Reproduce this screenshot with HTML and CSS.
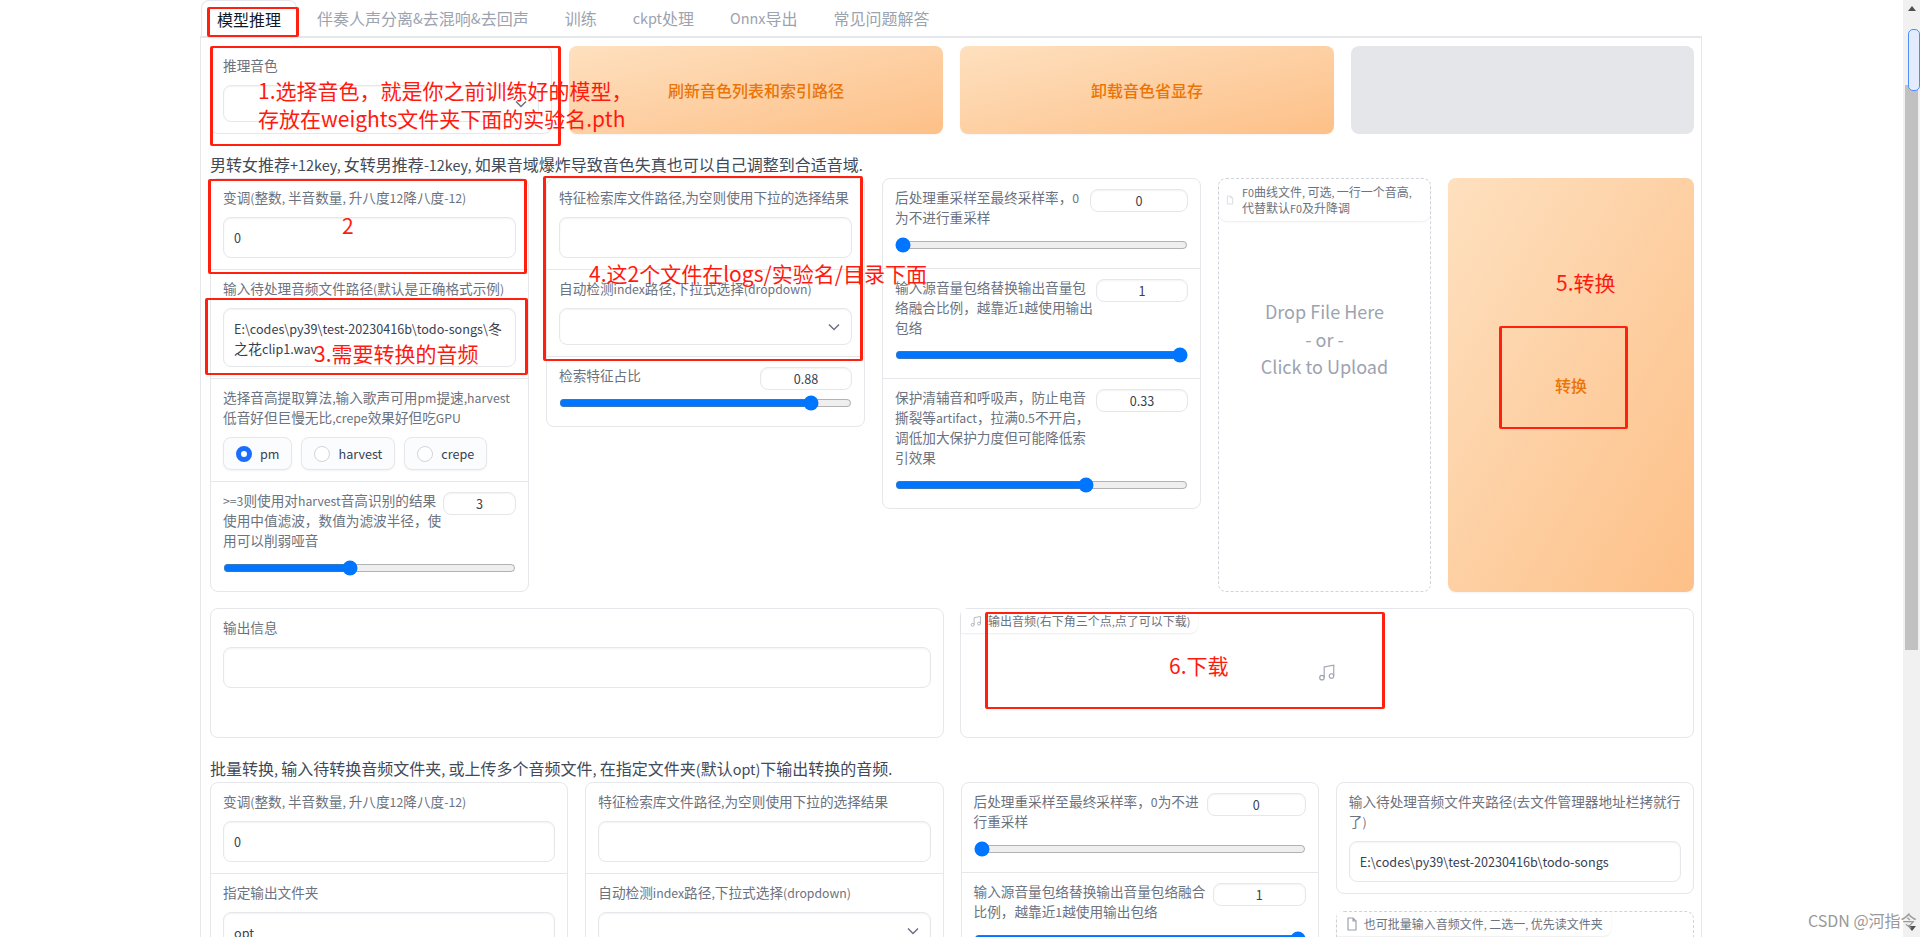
FILE: index.html
```html
<!DOCTYPE html>
<html lang="zh-CN">
<head>
    <meta charset="UTF-8">
    <meta name="viewport" content="width=device-width, initial-scale=1.0">
    <title>模型推理</title>
    <link rel="stylesheet" href="styles.css">
</head>
<body>
    <div class="page">
        <nav class="tabs">
            <div class="tab active">模型推理</div>
            <div class="tab">伴奏人声分离<span class="en">&amp;</span>去混响<span class="en">&amp;</span>去回声</div>
            <div class="tab">训练</div>
            <div class="tab"><span class="en">ckpt</span>处理</div>
            <div class="tab"><span class="en">Onnx</span>导出</div>
            <div class="tab">常见问题解答</div>
        </nav>

        <main class="frame">
            <section class="row-top">
                <div class="panel">
                    <div class="block">
                        <div class="label">推理音色</div>
                        <div class="input select">
                            <svg class="chevron" viewBox="0 0 12 8"><path d="M1 1.5l5 5 5-5"/></svg>
                        </div>
                    </div>
                </div>
                <button class="btn" type="button">刷新音色列表和索引路径</button>
                <button class="btn" type="button">卸载音色省显存</button>
                <div class="btn-empty"></div>
            </section>

            <p class="note">男转女推荐<span class="en">+12key, </span>女转男推荐<span class="en">-12key, </span>如果音域爆炸导致音色失真也可以自己调整到合适音域<span class="en">.</span></p>

            <section class="row-single">
                <div class="panel">
                    <div class="block">
                        <div class="label">变调<span class="en">(</span>整数<span class="en">, </span>半音数量<span class="en">, </span>升八度<span class="en">12</span>降八度<span class="en">-12)</span></div>
                        <div class="input">0</div>
                    </div>
                    <div class="block">
                        <div class="label">输入待处理音频文件路径<span class="en">(</span>默认是正确格式示例<span class="en">)</span></div>
                        <div class="input multi">E:\codes\py39\test-20230416b\todo-songs\<span class="zh">冬之花</span>clip1.wav</div>
                    </div>
                    <div class="block">
                        <div class="label">选择音高提取算法<span class="en">,</span>输入歌声可用<span class="en">pm</span>提速<span class="en">,harvest</span>低音好但巨慢无比<span class="en">,crepe</span>效果好但吃<span class="en">GPU</span></div>
                        <div class="radios">
                            <div class="radio"><span class="dot checked"></span>pm</div>
                            <div class="radio"><span class="dot"></span>harvest</div>
                            <div class="radio"><span class="dot"></span>crepe</div>
                        </div>
                    </div>
                    <div class="block">
                        <div class="num-row">
                            <div class="label"><span class="en">&gt;=3</span>则使用对<span class="en">harvest</span>音高识别的结果使用中值滤波，数值为滤波半径，使用可以削弱哑音</div>
                            <div class="num w73">3</div>
                        </div>
                        <input class="slider" type="range" min="0" max="7" value="3">
                    </div>
                </div>

                <div class="panel panel-short">
                    <div class="block">
                        <div class="label">特征检索库文件路径<span class="en">,</span>为空则使用下拉的选择结果</div>
                        <div class="input"></div>
                    </div>
                    <div class="block">
                        <div class="label">自动检测<span class="en">index</span>路径<span class="en">,</span>下拉式选择<span class="en">(dropdown)</span></div>
                        <div class="input select">
                            <svg class="chevron" viewBox="0 0 12 8"><path d="M1 1.5l5 5 5-5"/></svg>
                        </div>
                    </div>
                    <div class="block">
                        <div class="num-row">
                            <div class="label">检索特征占比</div>
                            <div class="num w92">0.88</div>
                        </div>
                        <input class="slider" type="range" min="0" max="1" step="0.01" value="0.88">
                    </div>
                </div>

                <div class="panel panel-short">
                    <div class="block">
                        <div class="num-row">
                            <div class="label">后处理重采样至最终采样率，<span class="en">0</span>为不进行重采样</div>
                            <div class="num w98">0</div>
                        </div>
                        <input class="slider" type="range" min="0" max="48000" value="0">
                    </div>
                    <div class="block">
                        <div class="num-row">
                            <div class="label">输入源音量包络替换输出音量包络融合比例，越靠近<span class="en">1</span>越使用输出包络</div>
                            <div class="num w92">1</div>
                        </div>
                        <input class="slider" type="range" min="0" max="1" step="0.01" value="1">
                    </div>
                    <div class="block">
                        <div class="num-row">
                            <div class="label">保护清辅音和呼吸声，防止电音撕裂等<span class="en">artifact</span>，拉满<span class="en">0.5</span>不开启，调低加大保护力度但可能降低索引效果</div>
                            <div class="num w92">0.33</div>
                        </div>
                        <input class="slider" type="range" min="0" max="0.5" step="0.01" value="0.33">
                    </div>
                </div>

                <div class="dropzone">
                    <div class="badge badge-full">
                        <svg class="file-icon faint" viewBox="0 0 12 14"><path d="M2 1h5l3 3v9H2zM7 1v3h3"/></svg>
                        <span><span class="en">F0</span>曲线文件<span class="en">, </span>可选<span class="en">, </span>一行一个音高<span class="en">, </span>代替默认<span class="en">F0</span>及升降调</span>
                    </div>
                    <div class="drop-text">
                        <div>Drop File Here</div>
                        <div>- or -</div>
                        <div>Click to Upload</div>
                    </div>
                </div>

                <button class="btn" type="button">转换</button>
            </section>

            <section class="row-output">
                <div class="panel">
                    <div class="block">
                        <div class="label">输出信息</div>
                        <div class="input"></div>
                    </div>
                </div>
                <div class="panel audio">
                    <div class="badge">
                        <svg class="music-icon small" viewBox="0 0 16 16"><circle cx="3.5" cy="13" r="2"/><circle cx="12" cy="11.5" r="2"/><path d="M5.5 13V3.5L14 2v9.5"/></svg>
                        <span>输出音频<span class="en">(</span>右下角三个点<span class="en">,</span>点了可以下载<span class="en">)</span></span>
                    </div>
                    <svg class="music-icon big" viewBox="0 0 16 16"><circle cx="3.5" cy="13" r="2"/><circle cx="12" cy="11.5" r="2"/><path d="M5.5 13V3.5L14 2v9.5"/></svg>
                </div>
            </section>

            <p class="note">批量转换<span class="en">, </span>输入待转换音频文件夹<span class="en">, </span>或上传多个音频文件<span class="en">, </span>在指定文件夹<span class="en">(</span>默认<span class="en">opt)</span>下输出转换的音频<span class="en">.</span></p>

            <section class="row-batch">
                <div class="panel">
                    <div class="block">
                        <div class="label">变调<span class="en">(</span>整数<span class="en">, </span>半音数量<span class="en">, </span>升八度<span class="en">12</span>降八度<span class="en">-12)</span></div>
                        <div class="input">0</div>
                    </div>
                    <div class="block">
                        <div class="label">指定输出文件夹</div>
                        <div class="input">opt</div>
                    </div>
                </div>
                <div class="panel">
                    <div class="block">
                        <div class="label">特征检索库文件路径<span class="en">,</span>为空则使用下拉的选择结果</div>
                        <div class="input"></div>
                    </div>
                    <div class="block">
                        <div class="label">自动检测<span class="en">index</span>路径<span class="en">,</span>下拉式选择<span class="en">(dropdown)</span></div>
                        <div class="input select">
                            <svg class="chevron" viewBox="0 0 12 8"><path d="M1 1.5l5 5 5-5"/></svg>
                        </div>
                    </div>
                </div>
                <div class="panel">
                    <div class="block">
                        <div class="num-row">
                            <div class="label">后处理重采样至最终采样率，<span class="en">0</span>为不进行重采样</div>
                            <div class="num w99">0</div>
                        </div>
                        <input class="slider" type="range" min="0" max="48000" value="0">
                    </div>
                    <div class="block">
                        <div class="num-row">
                            <div class="label">输入源音量包络替换输出音量包络融合比例，越靠近<span class="en">1</span>越使用输出包络</div>
                            <div class="num w93">1</div>
                        </div>
                        <input class="slider" type="range" min="0" max="1" step="0.01" value="1">
                    </div>
                </div>
                <div class="batch-side">
                    <div class="panel">
                        <div class="block">
                            <div class="label">输入待处理音频文件夹路径<span class="en">(</span>去文件管理器地址栏拷就行了<span class="en">)</span></div>
                            <div class="input">E:\codes\py39\test-20230416b\todo-songs</div>
                        </div>
                    </div>
                    <div class="dropzone">
                        <div class="badge">
                            <svg class="file-icon" viewBox="0 0 12 14"><path d="M2 1h5l3 3v9H2zM7 1v3h3"/></svg>
                            <span>也可批量输入音频文件<span class="en">, </span>二选一<span class="en">, </span>优先读文件夹</span>
                        </div>
                    </div>
                </div>
            </section>
        </main>
    </div>

    <div class="scrollbar">
        <span class="arrow up"></span>
        <span class="thumb"></span>
        <span class="thumb-focus"></span>
        <span class="arrow down"></span>
    </div>

    <!-- red notes drawn over the screenshot -->
    <div class="mark mark-tab"></div>
    <div class="mark mark-voice"></div>
    <div class="mark mark-pitch"></div>
    <div class="mark mark-path"></div>
    <div class="mark mark-index"></div>
    <div class="mark mark-run"></div>
    <div class="mark mark-audio"></div>
    <div class="mark-text text-voice">1.选择音色，就是你之前训练好的模型，<br>存放在weights文件夹下面的实验名.pth</div>
    <div class="mark-text text-pitch">2</div>
    <div class="mark-text text-path">3.需要转换的音频</div>
    <div class="mark-text text-index">4.这2个文件在logs/实验名/目录下面</div>
    <div class="mark-text text-run">5.转换</div>
    <div class="mark-text text-audio">6.下载</div>
    <div class="watermark">CSDN @河指令</div>
</body>
</html>
```

FILE: styles.css
```css
* {
    box-sizing: border-box;
}
html, body {
    height: 937px;
    overflow: hidden;
}
body {
    margin: 0;
    display: flex;
    background-color: white;
    color: #374151;
    font-family: "Noto Sans CJK SC", "Noto Sans", sans-serif;
    font-size: 13.65px;
    line-height: 20px;
}
.page {
    flex: 1;
    min-width: 0;
    padding: 0 201px 0 200px;
}
/* latin glyphs of the CJK font run large, the original page has them smaller */
.en {
    font-size: 0.9em;
    line-height: 1;
}
.zh {
    font-size: 14px;
    line-height: 1;
}

/* tabs */
.tabs {
    display: flex;
    height: 36px;
    padding-left: 1px;
}
.tab {
    display: flex;
    align-items: center;
    padding: 0 16px;
    margin-right: 4px;
    color: #9ca3af;
    font-size: 16px;
    white-space: pre;
}
.tab.active {
    padding: 0 15px;
    border: 1px solid #e5e7eb;
    border-bottom: none;
    border-radius: 8px 8px 0 0;
    color: #111827;
}

/* main frame */
.frame {
    height: 901px;
    padding: 8px 7px 0 9px;
    border: 1px solid #e5e7eb;
    border-top-width: 2px;
    border-bottom: none;
    overflow: hidden;
}
.row-top {
    display: grid;
    grid-template-columns: 342px 374px 374px 343px;
    gap: 17px;
}
.row-single {
    display: grid;
    grid-template-columns: 319px 319px 319px 213px 246px;
    gap: 17px;
    height: 414px;
    align-items: stretch;
}
.row-output {
    display: grid;
    grid-template-columns: repeat(2, 1fr);
    gap: 16px;
    height: 130px;
    margin-top: 16px;
}
.row-batch {
    display: grid;
    grid-template-columns: repeat(4, 1fr);
    gap: 17px;
}
.note {
    margin: 18px 0 2px;
    font-size: 16px;
    line-height: 24px;
    color: #414a59;
}

/* panels */
.panel {
    border: 1px solid #e5e7eb;
    border-radius: 8px;
    background-color: white;
}
.panel-short {
    align-self: start;
}
.block {
    padding: 8px 12px 11px;
    border-top: 1px solid #e5e7eb;
}
.block:first-child {
    border-top: none;
}
.label {
    margin-bottom: 10px;
    color: #6b7280;
}
.input {
    display: flex;
    align-items: center;
    height: 41px;
    padding: 0 10px;
    border: 1px solid #e5e7eb;
    border-radius: 8px;
    box-shadow: inset 0 1px 2px rgba(0,0,0,0.05);
    color: #374151;
    font-size: 12.6px;
}
.input.multi {
    display: block;
    height: 59px;
    padding: 10px 10px 0;
    word-break: break-all;
}
.input.select {
    height: 37px;
    justify-content: flex-end;
}
.chevron {
    width: 12px;
    height: 8px;
    margin-right: 1px;
    fill: none;
    stroke: #6b7280;
    stroke-width: 1.5;
}

/* radios */
.radios {
    display: flex;
    gap: 9px;
}
.radio {
    display: flex;
    align-items: center;
    gap: 8px;
    height: 33px;
    padding: 0 12px;
    border: 1px solid #e5e7eb;
    border-radius: 8px;
    box-shadow: 0 1px 2px rgba(0,0,0,0.05);
    background-color: #fbfcfd;
    font-size: 12.6px;
}
.dot {
    width: 16px;
    height: 16px;
    border: 1px solid #d1d5db;
    border-radius: 50%;
    background-color: white;
}
.dot.checked {
    border: 5px solid #1a6dff;
}

/* number + slider */
.num-row {
    display: flex;
    gap: 1px;
}
.num-row .label {
    flex: 1;
    margin-bottom: 0;
}
.num {
    flex: none;
    height: 23px;
    margin: 2px 0 -5px;
    border: 1px solid #e5e7eb;
    border-radius: 8px;
    box-shadow: inset 0 1px 2px rgba(0,0,0,0.05);
    text-align: center;
    line-height: 21px;
    color: #374151;
    font-size: 12.6px;
}
.w73 { width: 73px; }
.w92 { width: 92px; }
.w93 { width: 93px; }
.w98 { width: 98px; }
.w99 { width: 99px; }
.slider {
    display: block;
    width: 100%;
    margin: 10px 0 4px;
}

/* buttons */
.btn {
    border: none;
    border-radius: 8px;
    background: linear-gradient(to bottom right, #fee0bf, #fdc088);
    box-shadow: 0 1px 2px rgba(0,0,0,0.05);
    color: #ea7406;
    font-family: inherit;
    font-size: 16px;
    font-weight: 500;
}
.btn-empty {
    border-radius: 8px;
    background-color: #e5e6ea;
}

/* file drop */
.dropzone {
    position: relative;
    border: 1px dashed #d1d5db;
    border-radius: 8px;
}
.badge {
    display: inline-flex;
    align-items: center;
    gap: 6px;
    padding: 4px 8px 4px 9px;
    border-radius: 0 0 8px 0;
    background-color: white;
    box-shadow: 0 1px 2px rgba(0,0,0,0.08);
    color: #6b7280;
    font-size: 12px;
    line-height: 16px;
    vertical-align: top;
}
.badge-full {
    display: flex;
    gap: 8px;
    padding: 5px 12px 5px 7px;
    border-radius: 8px;
}
.drop-text {
    margin-top: 77px;
    text-align: center;
    color: #9ca3af;
    font-size: 18px;
    line-height: 27.5px;
}
.file-icon {
    flex: none;
    width: 12px;
    height: 14px;
    fill: none;
    stroke: #9ca3af;
    stroke-width: 1.2;
}
.file-icon.faint {
    width: 8px;
    height: 10px;
    stroke: #d1d5db;
}
.batch-side {
    display: flex;
    flex-direction: column;
    gap: 17px;
}
.batch-side .dropzone {
    height: 120px;
}

/* audio */
.audio {
    position: relative;
}
.music-icon {
    fill: none;
    stroke: #9ca3af;
    stroke-width: 1;
}
.music-icon.small {
    width: 12px;
    height: 12px;
}
.music-icon.big {
    position: absolute;
    left: 357px;
    top: 54px;
    width: 18px;
    height: 18px;
}

/* fake browser scrollbar */
.scrollbar {
    position: relative;
    flex: none;
    width: 17px;
    background-color: #f1f1f1;
}
.arrow {
    position: absolute;
    left: 5px;
    border-left: 4px solid transparent;
    border-right: 4px solid transparent;
}
.arrow.up {
    top: 6px;
    border-bottom: 5px solid #505050;
}
.arrow.down {
    top: 926px;
    border-top: 5px solid #505050;
}
.thumb {
    position: absolute;
    left: 2px;
    top: 85px;
    width: 13px;
    height: 565px;
    background-color: #c1c1c1;
}
.thumb-focus {
    position: absolute;
    left: 5px;
    top: 29px;
    width: 12px;
    height: 62px;
    border: 1px solid #4d8dff;
    border-radius: 5px;
    background-color: #e3ecff;
}

/* annotations */
.mark {
    position: absolute;
    border-style: solid;
    border-color: #ff2010;
    border-width: 2px 3px;
    border-radius: 2px;
}
.mark-tab { left: 207px; top: 7px; width: 92px; height: 30px; }
.mark-voice { left: 210px; top: 46px; width: 351px; height: 100px; }
.mark-pitch { left: 208px; top: 179px; width: 319px; height: 95px; }
.mark-path { left: 205px; top: 298px; width: 323px; height: 77px; }
.mark-index { left: 543px; top: 176px; width: 320px; height: 185px; }
.mark-run { left: 1499px; top: 326px; width: 129px; height: 103px; }
.mark-audio { left: 985px; top: 612px; width: 400px; height: 97px; }
.mark-text {
    position: absolute;
    color: #ff1a10;
    font-size: 21px;
    line-height: 28px;
    white-space: nowrap;
}
.text-voice { left: 258px; top: 76px; }
.text-pitch { left: 342px; top: 211px; }
.text-path { left: 314px; top: 339px; }
.text-index { left: 589px; top: 259px; }
.text-run { left: 1556px; top: 268px; }
.text-audio { left: 1169px; top: 651px; }
.watermark {
    position: absolute;
    left: 1808px;
    top: 908px;
    color: #999;
    font-size: 16px;
    line-height: 24px;
    white-space: nowrap;
}
```
